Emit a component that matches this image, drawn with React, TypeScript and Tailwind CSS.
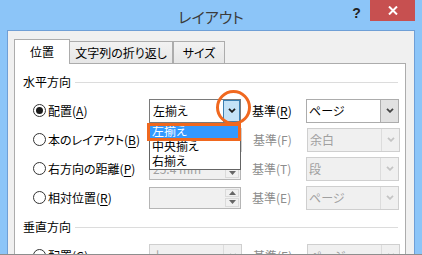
import React from 'react';

const jp = "font-['Noto_Sans_CJK_JP','Meiryo_UI',sans-serif] [font-feature-settings:'palt']";

function Chevron({ color = '#333' }: { color?: string }) {
  return (
    <svg width="8" height="5" viewBox="0 0 8 5">
      <path d="M1 0.8 L4 3.8 L7 0.8" fill="none" stroke={color} strokeWidth="1.8" />
    </svg>
  );
}

function Radio({ checked }: { checked?: boolean }) {
  return (
    <div className="w-[13px] h-[13px] rounded-full border border-[#333] bg-white flex items-center justify-center">
      {checked ? <div className="w-[7px] h-[7px] rounded-full bg-[#1a1a1a]" /> : null}
    </div>
  );
}

// label with underlined access key, e.g. 配置(A)
function Label({ text, k, disabled }: { text: string; k: string; disabled?: boolean }) {
  return (
    <span className={disabled ? 'text-[#8d8d8d]' : 'text-black'}>
      {text}(
      <span className={disabled ? '' : 'underline underline-offset-2'}>{k}</span>)
    </span>
  );
}

function Combo({ value, disabled }: { value: string; disabled?: boolean }) {
  return (
    <div
      className={`flex h-[24px] w-[93px] border ${
        disabled ? 'border-[#cfcfcf] bg-[#f0f0f0] text-[#a0a0a0]' : 'border-[#acacac] bg-white text-black'
      }`}
    >
      <div className="flex-1 flex items-center pl-[2px]">{value}</div>
      <div
        className={`w-[18px] flex items-center justify-center border-l ${
          disabled ? 'border-[#dcdcdc]' : 'border-[#acacac] bg-[#e1e1e1]'
        }`}
      >
        <Chevron color={disabled ? '#c4c4c4' : '#444'} />
      </div>
    </div>
  );
}

function Spin({ value }: { value: string }) {
  return (
    <div className="flex h-[22px] w-[92px] border border-[#b5b5b5] bg-[#f0f0f0] text-[#a0a0a0]">
      <div className="flex-1 flex items-center pl-[3px]">{value}</div>
      <div className="w-[15px] flex flex-col gap-[1px] py-[1px] pr-[1px]">
        <div className="flex-1 border border-[#dadada] flex items-center justify-center">
          <svg width="7" height="4" viewBox="0 0 7 4">
            <path d="M0 4 L3.5 0 L7 4 Z" fill="#666" />
          </svg>
        </div>
        <div className="flex-1 border border-[#dadada] flex items-center justify-center">
          <svg width="7" height="4" viewBox="0 0 7 4">
            <path d="M0 0 L3.5 4 L7 0 Z" fill="#666" />
          </svg>
        </div>
      </div>
    </div>
  );
}

function Section({ title }: { title: string }) {
  return (
    <div className="flex items-center h-[18px] pl-[8px] pr-[7px]">
      <span>{title}</span>
      <div className="flex-1 h-px bg-[#dcdcdc] ml-[4px]" />
    </div>
  );
}

function Row({
  checked,
  label,
  k,
  field,
  baseKey,
  baseDisabled,
  right,
}: {
  checked?: boolean;
  label: string;
  k: string;
  field: React.ReactNode;
  baseKey: string;
  baseDisabled?: boolean;
  right: React.ReactNode;
}) {
  return (
    <div className="flex items-center h-[29px] pl-[18px]">
      <Radio checked={checked} />
      <div className="ml-[2px] w-[101px]">
        <Label text={label} k={k} />
      </div>
      {field}
      <div className="ml-[11px] w-[54px]">
        <Label text="基準" k={baseKey} disabled={baseDisabled} />
      </div>
      {right}
    </div>
  );
}

function OpenCombo() {
  return (
    <div className="relative flex h-[24px] w-[92px] border border-[#7a7a7a] bg-white">
      <div className="flex-1 flex items-center pl-[3px]">左揃え</div>
      <div className="w-[17px] my-[0px] flex items-center justify-center border border-[#3c7fb1] bg-[#c4e2f7]">
        <Chevron color="#1a1a1a" />
      </div>
      {/* orange annotation circle */}
      <div className="absolute left-[66px] top-[-10px] w-[35px] h-[35px] rounded-full border-[3px] border-[#f0681f] z-20" />
      {/* dropdown list */}
      <div className="absolute left-[-1px] top-[23px] w-[92px] bg-white border border-[#646464] z-20 py-[0px]">
        <div className="relative h-[15px] flex items-center pl-[2px] bg-[#3399ff] text-white">
          左揃え
          <div className="absolute left-[-3px] right-[-1px] top-[-1px] bottom-[-2px] border-[3px] border-[#f0681f]" />
        </div>
        <div className="h-[15px] flex items-center pl-[2px]">中央揃え</div>
        <div className="h-[15px] flex items-center pl-[2px]">右揃え</div>
      </div>
    </div>
  );
}

export default function App() {
  return (
    <div className={`w-[422px] h-[255px] overflow-hidden bg-[#8cc5f8] border-b border-[#8e8e8e] text-[12px] leading-none ${jp}`}>
      {/* title bar */}
      <div className="h-[30px] grid grid-cols-[1fr_auto_1fr]">
        <div />
        <div className="flex items-center pt-[3px] text-[15px] text-[#3b3b3b]">レイアウト</div>
        <div className="flex justify-end items-start pr-[7px]">
          <div className="w-[13px] mt-[6px] mr-[7px] text-center text-[14px] font-bold text-[#222] font-['Liberation_Sans',sans-serif]">
            ?
          </div>
          <div className="w-[45px] h-[21px] bg-[#c75050] flex items-center justify-center">
            <svg width="10" height="9" viewBox="0 0 10 9">
              <path d="M1 0.5 L9 8.5 M9 0.5 L1 8.5" stroke="#fff" strokeWidth="2" />
            </svg>
          </div>
        </div>
      </div>

      {/* dialog body */}
      <div className="mx-[7px] border border-[#6f9fd6] bg-[#f0f0f0] pt-[8px] pl-[6px] pr-[8px] h-[260px]">
        <div className="flex items-end h-[24px]">
          <div className="relative z-10 mb-[-1px] h-[25px] w-[56px] border border-b-0 border-[#acacac] bg-white flex items-center justify-center">
            位置
          </div>
          <div className="h-[22px] w-[103px] border-t border-r border-[#acacac] bg-linear-to-b from-[#f2f2f2] to-[#e6e6e6] flex items-center justify-center">
            文字列の折り返し
          </div>
          <div className="h-[22px] w-[52px] border-t border-x border-[#acacac] bg-linear-to-b from-[#f2f2f2] to-[#e6e6e6] flex items-center justify-center">
            サイズ
          </div>
        </div>

        <div className="w-[392px] h-[300px] border border-[#acacac] bg-white pt-[9px]">
          <Section title="水平方向" />
          <div className="mt-[5px]">
            <Row checked label="配置" k="A" field={<OpenCombo />} baseKey="R" right={<Combo value="ページ" />} />
            <Row
              label="本のレイアウト"
              k="B"
              field={<Combo value="" disabled />}
              baseKey="F"
              baseDisabled
              right={<Combo value="余白" disabled />}
            />
            <Row
              label="右方向の距離"
              k="P"
              field={<Spin value="25.4 mm" />}
              baseKey="T"
              baseDisabled
              right={<Combo value="段" disabled />}
            />
            <Row
              label="相対位置"
              k="R"
              field={<Spin value="" />}
              baseKey="E"
              baseDisabled
              right={<Combo value="ページ" disabled />}
            />
          </div>
          <div className="mt-[6px]">
            <Section title="垂直方向" />
          </div>
          <div className="mt-[5px]">
            <Row
              label="配置"
              k="G"
              field={<Combo value="上" disabled />}
              baseKey="E"
              baseDisabled
              right={<Combo value="ページ" disabled />}
            />
          </div>
        </div>
      </div>
    </div>
  );
}
